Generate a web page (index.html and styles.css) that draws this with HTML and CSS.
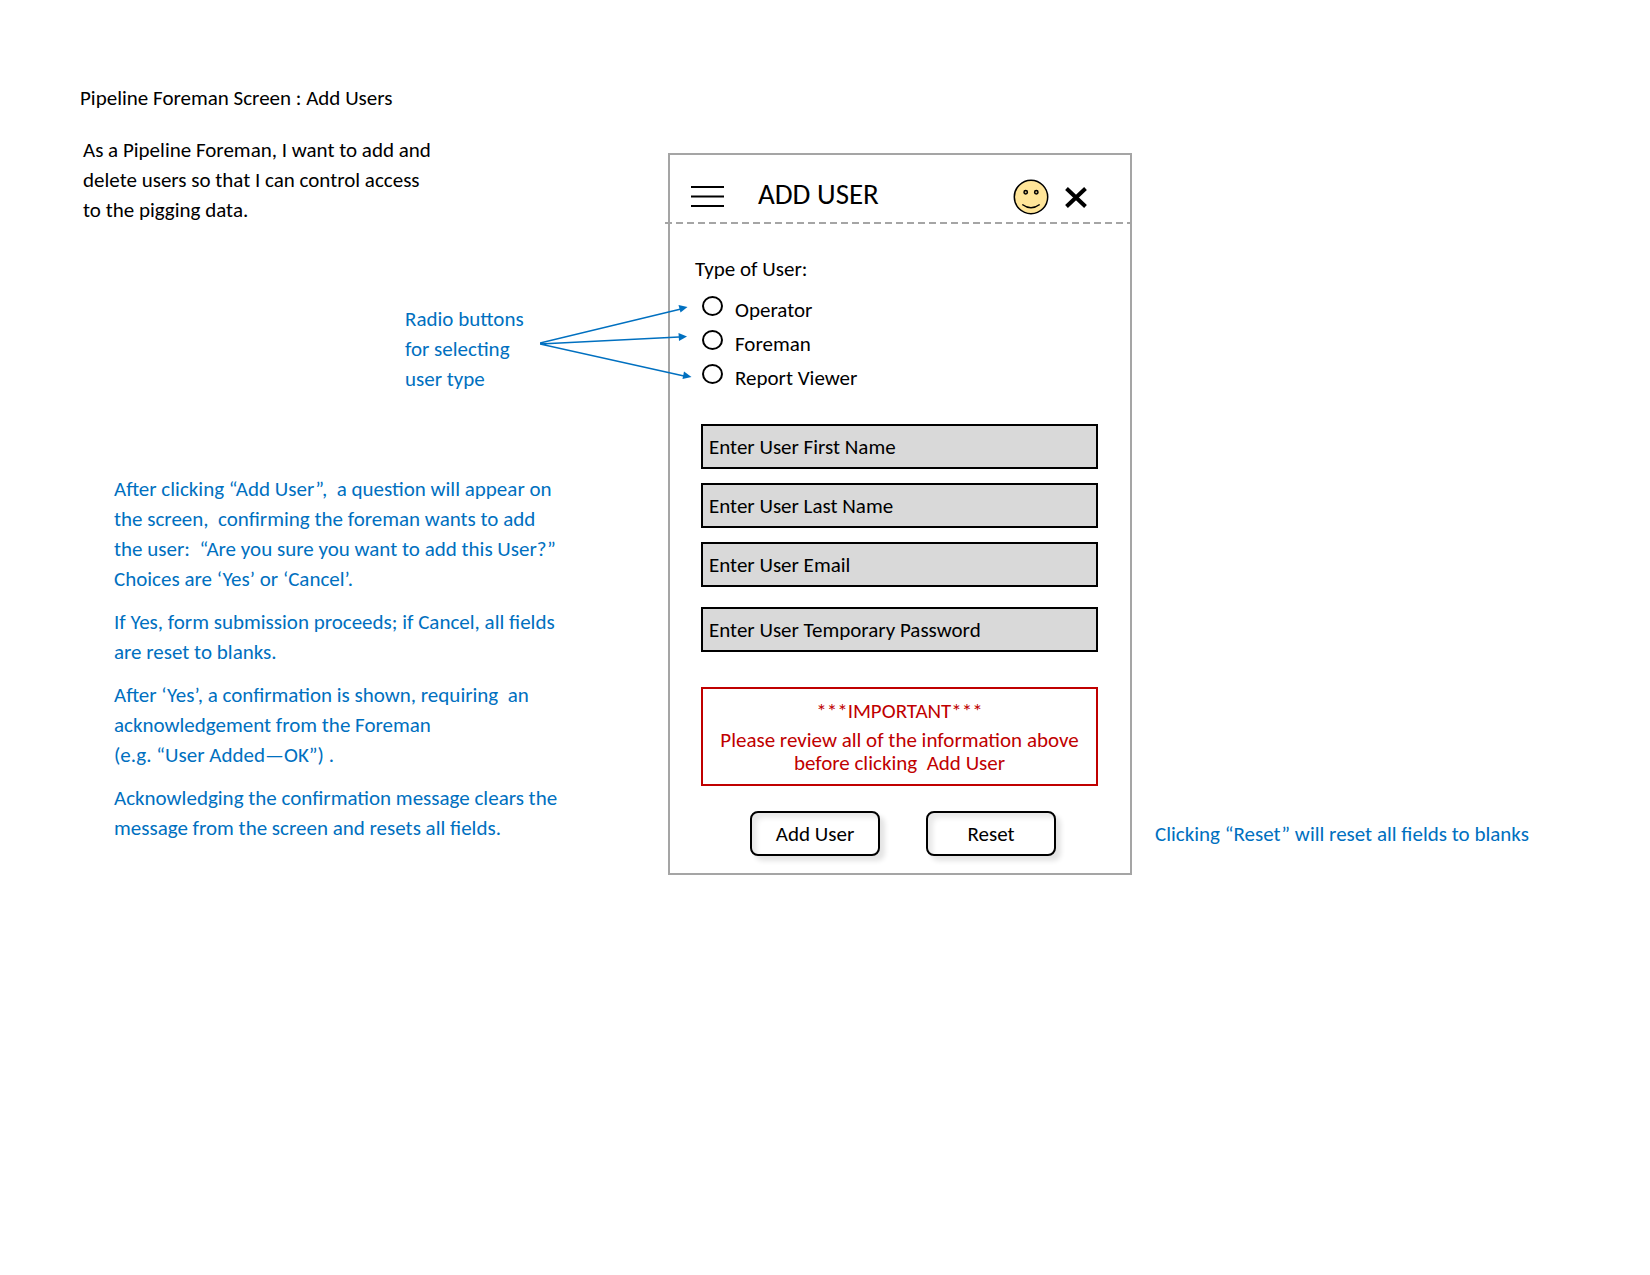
FILE: index.html
```html
<!DOCTYPE html>
<html lang="en">
<head>
<meta charset="utf-8">
<title>Pipeline Foreman Screen : Add Users</title>
<link rel="stylesheet" href="styles.css">
</head>
<body>
<main class="board">
  <section class="story">
    <h1 class="board-title">Pipeline Foreman Screen : Add Users</h1>
    <p class="summary">As a Pipeline Foreman, I want to add and<br>delete users so that I can control access<br>to the pigging data.</p>
    <div class="callout">
      <p class="note">Radio buttons<br>for selecting<br>user type</p>
      <svg class="arrows" width="152" height="76" viewBox="0 0 152 76" aria-hidden="true">
        <g fill="none" stroke="#0070c0" stroke-width="1.5">
          <path d="M0 39L141 5M0 40L139 33M0 40L144 72"/>
        </g>
        <g fill="#0070c0">
          <path d="M147.500 3L138.500 1L140.500 8.500Z"/>
          <path d="M147 32.500L138.500 29L139 37Z"/>
          <path d="M151.500 73L144 67.500L142.500 75Z"/>
        </g>
      </svg>
    </div>
    <div class="notes">
      <p class="note">After clicking “Add User”,&nbsp; a question will appear on<br>the screen,&nbsp; confirming the foreman wants to add<br>the user:&nbsp; “Are you sure you want to add this User?”<br>Choices are ‘Yes’ or ‘Cancel’.</p>
      <p class="note">If Yes, form submission proceeds; if Cancel, all fields<br>are reset to blanks.</p>
      <p class="note">After ‘Yes’, a confirmation is shown, requiring&nbsp; an<br>acknowledgement from the Foreman<br>(e.g. “User Added—OK”) .</p>
      <p class="note">Acknowledging the confirmation message clears the<br>message from the screen and resets all fields.</p>
    </div>
  </section>

  <section class="screen">
    <header class="screen-head">
      <button class="icon-button" type="button" aria-label="Menu">
        <svg width="33" height="24" viewBox="0 0 33 24"><path d="M0 2H33M0 11.500H33M0 21H33" stroke="#000" stroke-width="2"/></svg>
      </button>
      <h2 class="screen-title">ADD USER</h2>
      <svg class="face" width="36" height="36" viewBox="0 0 36 36" role="img" aria-label="Profile">
        <circle cx="18" cy="18" r="16.700" fill="#ffe599" stroke="#000" stroke-width="1.500"/>
        <g fill="#d6bf7c" stroke="#000" stroke-width="1.500"><circle cx="12.700" cy="13.200" r="1.700"/><circle cx="23.300" cy="13.200" r="1.700"/></g>
        <path d="M9.300 25.500Q18 32 26.700 25.500" fill="none" stroke="#000" stroke-width="1.500"/>
      </svg>
      <button class="icon-button" type="button" aria-label="Close">
        <svg width="24" height="24" viewBox="0 0 24 24"><path d="M2.500 3.500L21.500 21.500M21.500 3.500L2.500 21.500" stroke="#000" stroke-width="4"/></svg>
      </button>
    </header>
    <form class="form">
      <fieldset class="types">
        <legend class="types-title">Type of User:</legend>
        <label class="choice"><input class="radio" type="radio" name="type"><span>Operator</span></label>
        <label class="choice"><input class="radio" type="radio" name="type"><span>Foreman</span></label>
        <label class="choice"><input class="radio" type="radio" name="type"><span>Report Viewer</span></label>
      </fieldset>
      <div class="fields">
        <input class="field" type="text" placeholder="Enter User First Name" aria-label="Enter User First Name">
        <input class="field" type="text" placeholder="Enter User Last Name" aria-label="Enter User Last Name">
        <input class="field" type="email" placeholder="Enter User Email" aria-label="Enter User Email">
        <input class="field field-password" type="password" placeholder="Enter User Temporary Password" aria-label="Enter User Temporary Password">
      </div>
      <div class="warning">
        <p>***IMPORTANT***</p>
        <p>Please review all of the information above<br>before clicking&nbsp; Add User</p>
      </div>
      <div class="actions">
        <button class="action" type="button">Add User</button>
        <button class="action" type="reset">Reset</button>
      </div>
    </form>
  </section>

  <p class="note reset-note">Clicking “Reset” will reset all fields to blanks</p>
</main>
</body>
</html>
```

FILE: styles.css
```css
* {
  box-sizing: border-box;
}

body {
  margin: 0;
  background: #fff;
  color: #000;
  font: 21px/30px Carlito, Lato, sans-serif;
}

h1, h2, p {
  margin: 0;
  font-weight: 400;
}

input, button {
  font: inherit;
  color: inherit;
}

.board {
  display: grid;
  grid-template-columns: 668fr 464fr 518fr;
  align-items: start;
}

.story {
  position: relative;
  z-index: 1;
  padding: 83px 0 0 80px;
  white-space: nowrap;
}

.board-title {
  font-size: 21px;
}

.summary {
  margin: 22px 0 79px 3px;
}

.note {
  color: #0070c0;
}

.callout {
  display: flex;
  justify-content: flex-end;
  gap: 16px;
  margin-right: -24px;
}

.callout .note {
  width: 119px;
}

.arrows {
  display: block;
}

.notes {
  display: grid;
  gap: 13px;
  margin: 80px 0 0 34px;
}

.screen {
  margin-top: 153px;
  border: 2px solid #a5a5a5;
}

.screen-head {
  display: flex;
  align-items: center;
  height: 69px;
  margin-left: -5px;
  padding: 14px 42px 0 26px;
  background: repeating-linear-gradient(90deg, #a5a5a5 0 7px, transparent 7px 11px) bottom / 100% 2px no-repeat;
}

.icon-button {
  display: flex;
  padding: 0;
  border: 0;
  background: none;
}

.screen-title {
  flex: 1;
  margin-left: 34px;
  padding-bottom: 6px;
  font-size: 29px;
}

.face {
  margin-right: 15px;
}

.form {
  padding: 30px 32px 17px 31px;
}

.types {
  display: grid;
  gap: 6px;
  margin: 0;
  padding: 0;
  border: 0;
}

.types-title {
  margin-left: -6px;
  padding: 0 0 12px;
}

.choice {
  display: flex;
  align-items: flex-start;
  gap: 12px;
  padding-left: 1px;
  line-height: 28px;
}

.radio {
  appearance: none;
  width: 21px;
  height: 20px;
  margin: 0;
  border: 2px solid #000;
  border-radius: 50%;
}

.radio:checked {
  background: #000;
}

.fields {
  display: grid;
  gap: 14px;
  margin-top: 32px;
}

.field {
  width: 100%;
  height: 45px;
  padding: 0 6px;
  border: 2px solid #000;
  border-radius: 0;
  background: #d9d9d9;
}

.field::placeholder {
  color: #000;
  opacity: 1;
}

.field-password {
  margin-top: 6px;
}

.warning {
  display: grid;
  gap: 6px;
  margin-top: 35px;
  padding: 11px 0 9px;
  border: 2px solid #c00000;
  color: #c00000;
  line-height: 23px;
  text-align: center;
  white-space: nowrap;
}

.actions {
  display: flex;
  gap: 46px;
  margin: 25px 0 0 49px;
}

.action {
  width: 130px;
  height: 45px;
  padding: 0;
  border: 2px solid #000;
  border-radius: 8px;
  background: #fff;
  box-shadow: 5px 5px 5px #e4e4e4, inset 5px 5px 5px #e9e9e9;
}

.reset-note {
  align-self: end;
  padding: 0 0 26px 23px;
}
```
